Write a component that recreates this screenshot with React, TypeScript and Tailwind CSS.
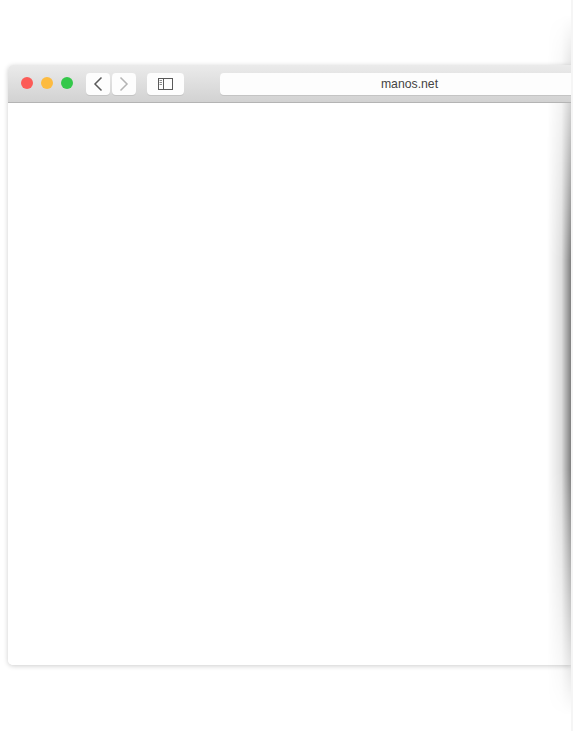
import React from 'react';

const ToolButton: React.FC<{ className: string; children: React.ReactNode }> = ({ className, children }) => (
  <div className={`h-[22px] bg-[#fdfdfd] shadow-[0_1px_0_#c4c4c4] flex items-center justify-center ${className}`}>
    {children}
  </div>
);

export default function App() {
  return (
    <div className="relative h-[731px] w-full overflow-hidden bg-white flex font-['Liberation_Sans',Arial,sans-serif]">
      <div className="flex-1 min-w-0 pl-2 pt-[65px]">
        <div className="h-[600px] rounded-l-[5px] bg-white shadow-[0_1px_5px_rgba(0,0,0,0.2)] flex flex-col overflow-hidden">
          <div className="relative z-10 h-[38px] shrink-0 flex items-center pl-[13px] pt-px bg-gradient-to-b from-[#ebebeb] to-[#d2d2d2] border-b border-[#b4b4b4]">
            <div className="flex gap-2 -mt-0.5">
              <div className="size-3 rounded-full bg-[#fc5b57]" />
              <div className="size-3 rounded-full bg-[#fdbb40]" />
              <div className="size-3 rounded-full bg-[#34c84a]" />
            </div>
            <ToolButton className="w-6 ml-[13px] rounded-[4px]">
              <svg width="10" height="16" viewBox="0 0 10 16" fill="none" stroke="#5a5a5a" strokeWidth="1.5">
                <path d="M8.5 1.5 L2 8 L8.5 14.5" />
              </svg>
            </ToolButton>
            <ToolButton className="w-6 ml-0.5 rounded-[4px]">
              <svg width="10" height="16" viewBox="0 0 10 16" fill="none" stroke="#b4b4b4" strokeWidth="1.5">
                <path d="M1.5 1.5 L8 8 L1.5 14.5" />
              </svg>
            </ToolButton>
            <ToolButton className="w-[37px] ml-[11px] rounded-[4px]">
              <svg width="15" height="12" viewBox="0 0 15 12" fill="none" stroke="#595959">
                <rect x="0.5" y="0.5" width="14" height="11" />
                <path d="M5.5 0.5 V11.5" />
                <path d="M1.5 2.5 H4 M1.5 4.5 H4 M1.5 6.5 H4" stroke="#8a8a8a" />
              </svg>
            </ToolButton>
            <ToolButton className="flex-1 ml-9 rounded-l-[4px] pl-7 text-[12.25px] text-[#444444]">
              manos.net
            </ToolButton>
          </div>
          <div className="flex-1 bg-white" />
        </div>
      </div>
      <div className="relative w-0.5 shrink-0">
        <div className="absolute -left-[24px] top-[15px] h-[700px] w-6 bg-gradient-to-l from-[rgba(0,0,0,0.5)] via-[rgba(0,0,0,0.13)] via-40% to-transparent [mask-image:linear-gradient(to_bottom,transparent,black_35%,black_65%,transparent)]" />
        <div className="absolute inset-0 bg-[#f5f5f5]" />
      </div>
    </div>
  );
}
